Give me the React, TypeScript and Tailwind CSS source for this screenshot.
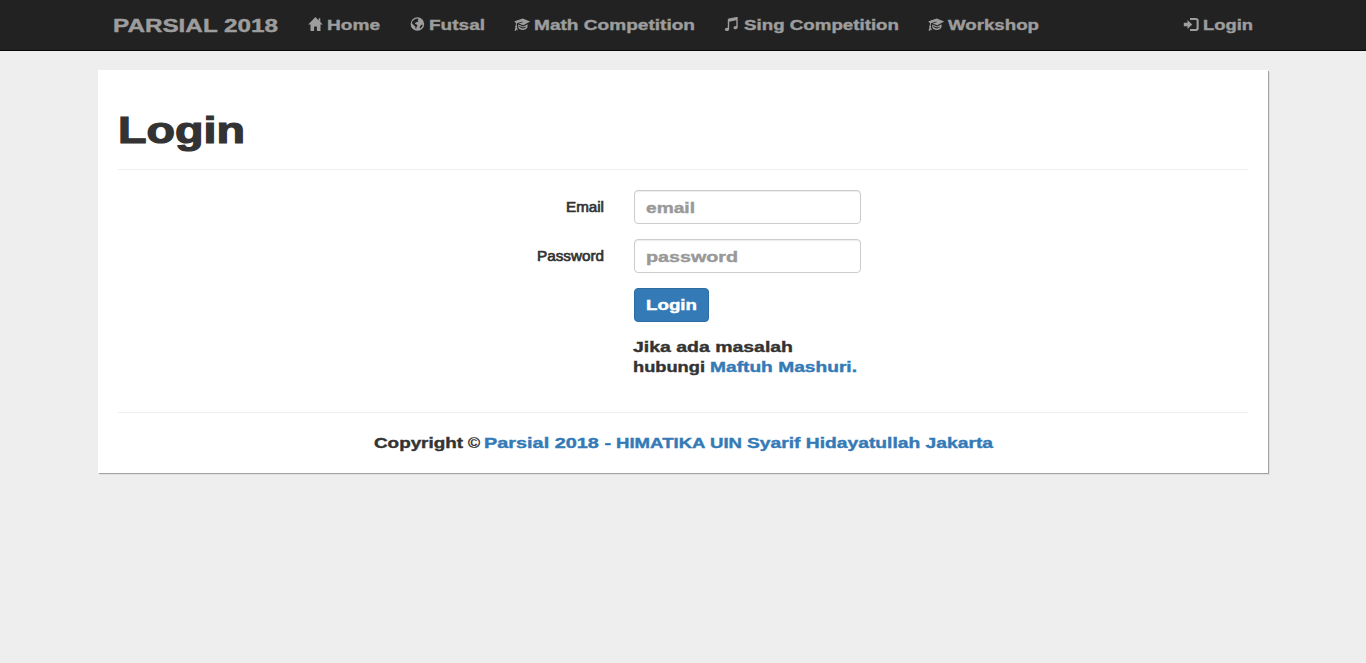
import { useLayoutEffect, useRef, type ReactNode } from "react";

/** Text set in an extended cut: the glyphs are stretched to fill the width of the box. */
function Wide({ className, children }: { className: string; children: ReactNode }) {
  const box = useRef<HTMLSpanElement>(null);
  const text = useRef<HTMLSpanElement>(null);
  useLayoutEffect(() => {
    if (box.current && text.current) {
      text.current.style.transform = `scaleX(${box.current.offsetWidth / text.current.getBoundingClientRect().width})`;
    }
  }, []);
  return (
    <span ref={box} className={`inline-flex shrink-0 whitespace-nowrap ${className}`}>
      <span ref={text} className="inline-block shrink-0 origin-left">
        {children}
      </span>
    </span>
  );
}

function HomeIcon() {
  return (
    <svg className="mt-[17px] h-[14px] w-[15px] shrink-0" viewBox="0 0 15 14" fill="currentColor">
      <path d="M7.4 0 .2 7.5h2.3V14h3.6V9.5h2.8V14h3.6V7.5h2.3L12.3 5V1.2h-1.6v2.2Z" />
    </svg>
  );
}

function GlobeIcon() {
  return (
    <svg className="mt-[17px] h-[14px] w-[15px] shrink-0" viewBox="0 0 15 14" fill="currentColor">
      <path
        fillRule="evenodd"
        d="M7.4.2a6.8 6.8 0 1 0 0 13.6 6.8 6.8 0 0 0 0-13.6ZM5.2 1.9 7.4 1.6 8.6 2.3 7.6 3.4 8.6 4.2 7.2 5 5.8 5.4 4.8 6.8 6.2 7.2 7.4 8.2 7.2 9.4 6.3 10.2 6.3 12 5.6 11.5 5.2 9.5 3.4 7.8 2 6.5 2.3 4.3ZM11 8 12.4 7.4 12.6 8.8 11.2 10.8 10 11.6 9.6 10.2Z"
      />
    </svg>
  );
}

function CapIcon() {
  return (
    <svg className="mt-[17px] h-[15px] w-[17px] shrink-0" viewBox="0 0 17 15" fill="currentColor">
      <path d="M8.7 1.6 16.2 4.6 9.2 8.3 4.6 6.6 8.7 5.2 8.4 4.6 3 6.3 2.6 8.4 3.3 9.1 2.9 10.2 4 13.5 2.6 12.4 1.8 13.9.6 13.5 1.5 10 1.1 9.1 1.7 8.4 2 5.9.6 5 .6 4.2Z" />
      <path d="m4.1 7.4 5.1 2 4.3-2.1v2.9L12.2 12l-2.6 1H7.900l-2.600-1.100-1.200-1.700V9l1.400 1 2.600 1.400h1.400l2.300-1.200.3-.8-2.900 1.200-5.100-1.900Z" />
    </svg>
  );
}

function MusicIcon() {
  return (
    <svg className="mt-[17px] h-[14px] w-[15px] shrink-0" viewBox="0 0 15 14" fill="currentColor">
      <path d="M13.700 0v10.300c0 1.200-1 2-2.200 2-1.100 0-2-.500-2-1.400 0-1.200 1.300-2 2.800-1.800V3.200L5.200 4.800v7.100c0 1.200-1 2.100-2.400 2.100C1.500 14 .8 13.400.8 12.600c0-1.200 1.400-2.100 3-1.800V2.600C3.800 2 4.100 1.700 4.700 1.500L12.500 0Z" />
    </svg>
  );
}

function LoginIcon() {
  return (
    <svg className="mt-[18px] h-[13px] w-[16px] shrink-0" viewBox="0 0 16 13" fill="currentColor">
      <path d="M.8 4.800h3.700V2L9.200 6.500 4.500 11V8.200H.8Z" />
      <path d="M7 0h6c1.600 0 2.700 1.100 2.700 2.500v8c0 1.400-1.100 2.500-2.700 2.500H7v-2.100h5.600c.600 0 1-.400 1-.900V3c0-.500-.400-.900-1-.900H7Z" />
    </svg>
  );
}

export default function App() {
  const field =
    "flex h-[34px] w-[227px] rounded-[4px] border border-[#ccc] bg-white pl-[11px] text-[#999] leading-[33px] shadow-[inset_0_1px_1px_rgba(0,0,0,0.075)]";
  const label =
    "mr-[30px] flex w-[486px] justify-end text-[14px] font-normal leading-[34px] [-webkit-text-stroke:0.65px_currentColor]";
  return (
    <div className="min-h-[663px] bg-[#eee] font-['Liberation_Sans',sans-serif] text-[15px] font-bold leading-5 text-[#333] [-webkit-text-stroke:0.4px_currentColor]">
      <nav className="h-[51px] border-b border-[#080808] bg-[#222] text-[#9d9d9d]">
        <div className="mx-auto flex h-[50px] w-[1170px] items-start px-[15px] leading-[50px]">
          <a className="mr-[30px] flex pt-px">
            <Wide className="w-[165px] text-[18px]">PARSIAL 2018</Wide>
          </a>
          <a className="mr-[30px] flex w-[72px] justify-between">
            <HomeIcon />
            <Wide className="w-[53px]">Home</Wide>
          </a>
          <a className="mr-[29px] flex w-[75px] justify-between">
            <GlobeIcon />
            <Wide className="w-[56px]">Futsal</Wide>
          </a>
          <a className="mr-[29px] flex w-[181px] justify-between">
            <CapIcon />
            <Wide className="w-[161px]">Math Competition</Wide>
          </a>
          <a className="mr-[29px] flex w-[175px] justify-between">
            <MusicIcon />
            <Wide className="w-[155px]">Sing Competition</Wide>
          </a>
          <a className="flex w-[111px] justify-between">
            <CapIcon />
            <Wide className="w-[91px]">Workshop</Wide>
          </a>
          <a className="ml-auto flex w-[70px] justify-between">
            <LoginIcon />
            <Wide className="w-[50px]">Login</Wide>
          </a>
        </div>
      </nav>

      <main className="mx-auto mt-[19px] h-[403px] w-[1170px] bg-white px-5 pt-[41px] shadow-[1px_1px_0_#a3a3a3,2px_2px_0_#e0e0e0]">
        <header className="h-[59px] border-b border-[#eee]">
          <h1 className="flex leading-[40px]">
            <Wide className="w-[127px] text-[36px] [-webkit-text-stroke:1.2px_currentColor]">Login</Wide>
          </h1>
        </header>

        <form className="mt-5 flex flex-col gap-[15px]">
          <div className="flex">
            <label className={label}>
              <Wide className="w-[38px]">Email</Wide>
            </label>
            <div className={field}>
              <Wide className="w-[49px]">email</Wide>
            </div>
          </div>
          <div className="flex">
            <label className={label}>
              <Wide className="w-[67px]">Password</Wide>
            </label>
            <div className={field}>
              <Wide className="w-[92px]">password</Wide>
            </div>
          </div>
          <div className="ml-[515px] flex flex-col items-start">
            <button
              type="button"
              className="ml-px flex h-[34px] w-[75px] justify-center rounded-[4px] border border-[#2e6da4] bg-[#337ab7] leading-8 text-white"
            >
              <Wide className="w-[51px]">Login</Wide>
            </button>
            <p className="mt-[15px] flex flex-col">
              <Wide className="w-[160px]">Jika ada masalah</Wide>
              <span className="flex gap-[5px]">
                <Wide className="w-[72px]">hubungi</Wide>
                <a className="flex text-[#337ab7]">
                  <Wide className="w-[147px]">Maftuh Mashuri.</Wide>
                </a>
              </span>
            </p>
          </div>
        </form>

        <footer className="mt-[35px] flex justify-center border-t border-[#eee] pt-5">
          <Wide className="w-[89px]">Copyright</Wide>
          <Wide className="ml-[5px] w-[12px] text-[14px] font-normal">©</Wide>
          <a className="ml-1 flex gap-[5px] text-[#337ab7]">
            <Wide className="w-[127px]">Parsial 2018 -</Wide>
            <Wide className="w-[126px]">HIMATIKA UIN</Wide>
            <Wide className="w-[246px]">Syarif Hidayatullah Jakarta</Wide>
          </a>
        </footer>
      </main>
    </div>
  );
}
